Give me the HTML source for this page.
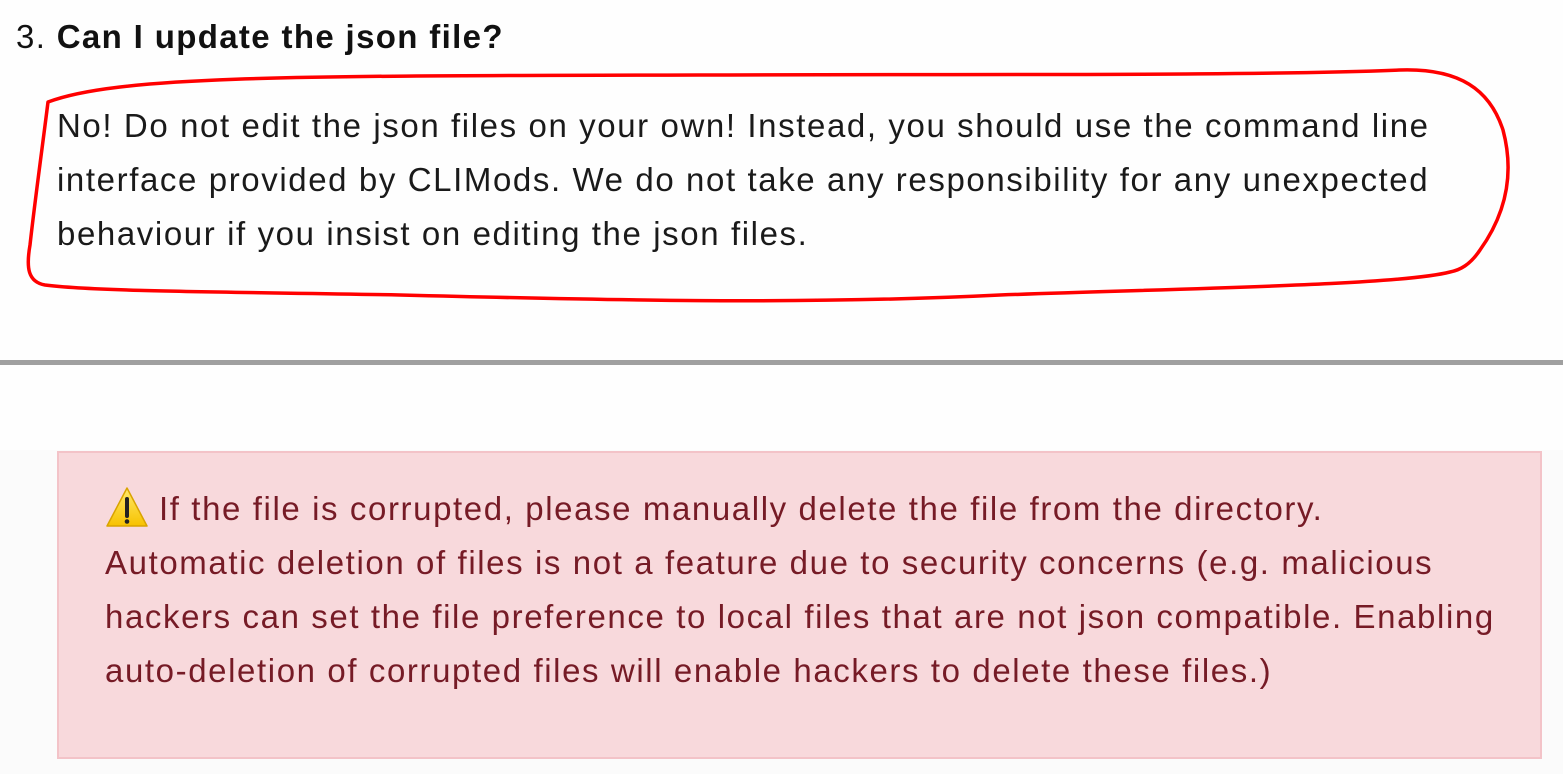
<!DOCTYPE html>
<html><head><meta charset="utf-8"><style>
html,body{margin:0;padding:0}
body{width:1563px;height:774px;background:#fefefe;font-family:"Liberation Sans",sans-serif;position:relative;overflow:hidden}
.h{position:absolute;left:16px;top:18px;font-size:33px;color:#111;letter-spacing:1.35px}
.p{position:absolute;left:57px;top:99px;font-size:33px;line-height:54px;color:#1a1a1a;width:1480px;letter-spacing:1.6px;white-space:nowrap}
.rule{position:absolute;left:0;top:360px;width:1563px;height:5px;background:#a0a0a0}
.low{position:absolute;left:0;top:450px;width:1563px;height:324px;background:#fbfbfb}
.box{position:absolute;left:57px;top:451px;width:1481px;height:304px;background:#f8d9dc;border:2px solid #f3c3c8}
.bt{position:absolute;left:46px;top:29px;font-size:33px;line-height:54px;color:#761b26;width:1430px;letter-spacing:1.6px;white-space:nowrap}
</style></head><body>
<div class="h">3. <b>Can I update the json file?</b></div>
<div class="p">No! Do not edit the json files on your own! Instead, you should use the command line<br>interface provided by CLIMods. We do not take any responsibility for any unexpected<br>behaviour if you insist on editing the json files.</div>
<svg style="position:absolute;left:0;top:0" width="1563" height="340">
<path d="M48 102 C120 75 300 76 700 75 C1000 74 1250 76 1400 70 C1460 68 1490 90 1503 130 C1515 175 1505 215 1480 250 C1470 265 1460 270 1450 272 C1400 285 1200 288 1000 295 C800 305 600 300 400 295 C250 292 100 292 45 285 C28 282 26 268 30 245 C35 200 42 150 48 102 Z" fill="none" stroke="#f00" stroke-width="3.5" stroke-linejoin="round"/>
</svg>
<div class="rule"></div>
<div class="low"></div>
<div class="box"><div class="bt"><svg width="44" height="42" viewBox="0 0 44 42" style="vertical-align:-8px;margin-right:10px"><defs><linearGradient id="g" x1="0" y1="0" x2="0" y2="1"><stop offset="0" stop-color="#ffe96a"/><stop offset="1" stop-color="#f7c200"/></linearGradient></defs><path d="M22 2 L42 40 L2 40 Z" fill="url(#g)" stroke="#d9a300" stroke-width="1.5" stroke-linejoin="round"/><path d="M22 13 L22 30" stroke="#222" stroke-width="4" stroke-linecap="round"/><circle cx="22" cy="35.5" r="2.3" fill="#222"/></svg>If the file is corrupted, please manually delete the file from the directory.<br>Automatic deletion of files is not a feature due to security concerns (e.g. malicious<br>hackers can set the file preference to local files that are not json compatible. Enabling<br>auto-deletion of corrupted files will enable hackers to delete these files.)</div></div>
</body></html>
